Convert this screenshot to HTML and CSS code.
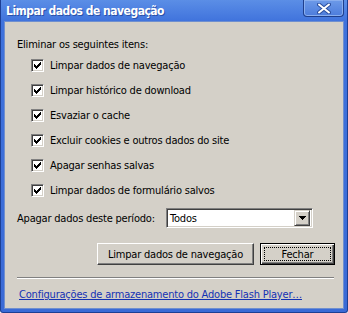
FILE: index.html
```html
<!DOCTYPE html>
<html lang="pt-BR">
<head>
    <meta charset="UTF-8">
    <title>Limpar dados de navegação</title>
    <link rel="stylesheet" href="styles.css">
</head>
<body>

<div class="window">
    <!-- Barra de título -->
    <div class="titlebar">
        <span class="title">Limpar dados de navegação</span>
        <div class="close-btn">
            <svg width="14" height="11" viewBox="0 0 14 11">
                <path d="M2 1.5 L12 9.5 M12 1.5 L2 9.5" stroke="#2c4f9e" stroke-width="4" stroke-linecap="round"/>
                <path d="M2 1.5 L12 9.5 M12 1.5 L2 9.5" stroke="#ffffff" stroke-width="2" stroke-linecap="round"/>
            </svg>
        </div>
    </div>

    <div class="client">
        <div class="heading">Eliminar os seguintes itens:</div>

        <div class="items">
            <div class="item"><span class="checkbox checked"></span>Limpar dados de navegação</div>
            <div class="item"><span class="checkbox checked"></span>Limpar histórico de download</div>
            <div class="item"><span class="checkbox checked"></span>Esvaziar o cache</div>
            <div class="item"><span class="checkbox checked"></span>Excluir cookies e outros dados do site</div>
            <div class="item"><span class="checkbox checked"></span>Apagar senhas salvas</div>
            <div class="item"><span class="checkbox checked"></span>Limpar dados de formulário salvos</div>
        </div>

        <div class="period">
            <span class="period-label">Apagar dados deste período:</span>
            <div class="select">
                <span class="select-value">Todos</span>
                <span class="select-arrow">
                    <svg width="7" height="4" viewBox="0 0 7 4"><path d="M0 0h7v1h-7z M1 1h5v1h-5z M2 2h3v1h-3z M3 3h1v1h-1z" fill="#000" shape-rendering="crispEdges"/></svg>
                </span>
            </div>
        </div>

        <div class="buttons">
            <button class="button">Limpar dados de navegação</button>
            <button class="button default"><span class="focus">Fechar</span></button>
        </div>

        <div class="separator"></div>

        <a class="link" href="#">Configurações de armazenamento do Adobe Flash Player…</a>
    </div>
</div>

</body>
</html>
```

FILE: styles.css
```css
body {
    margin: 0;
    background-color: #ffffff;
    font-family: "DejaVu Sans Condensed", "Liberation Sans", sans-serif;
    font-size: 11px;
    letter-spacing: -0.2px;
}

.window {
    width: 348px;
    height: 313px;
    box-sizing: border-box;
    display: flex;
    flex-direction: column;
    background: linear-gradient(#5b8ee6, #3f72dc 22px, #3a6ad6);
    border: 1px solid #1d3f94;
    border-top: none;
    border-radius: 0 0 3px 3px;
}

/* Barra de título */
.titlebar {
    height: 21px;
    display: flex;
    align-items: center;
    justify-content: space-between;
    padding-left: 5px;
}

.title {
    color: #ffffff;
    font-weight: bold;
    font-size: 12px;
    letter-spacing: -0.5px;
    text-shadow: 1px 1px 0 #2a50a8;
}

.close-btn {
    width: 41px;
    height: 17px;
    box-sizing: border-box;
    align-self: flex-start;
    margin-right: 3px;
    border: 1px solid #1f3f8c;
    border-top: none;
    border-radius: 0 0 4px 4px;
    background: linear-gradient(#6d9ae8, #4c7cdc);
    box-shadow: inset 0 0 0 1px #89aeee;
    display: flex;
    align-items: center;
    justify-content: center;
}

/* Conteúdo do diálogo */
.client {
    flex: 1;
    margin: 0 3px 3px 3px;
    background-color: #d4d0c8;
    border: 1px solid #6f8fcf;
    padding: 0 8px 0 12px;
    color: #000000;
}

.heading {
    margin-top: 16px;
    line-height: 14px;
}

.items {
    margin-top: 1px;
    padding-left: 14px;
}

.item {
    height: 25px;
    display: flex;
    align-items: center;
}

.checkbox {
    width: 13px;
    height: 13px;
    box-sizing: border-box;
    margin-right: 6px;
    background-color: #ffffff;
    border: 1px solid;
    border-color: #808080 #ffffff #ffffff #808080;
    box-shadow: inset 1px 1px 0 #404040, inset -1px -1px 0 #d4d0c8;
}

.checkbox.checked {
    background-image: url("data:image/svg+xml,%3Csvg xmlns='http://www.w3.org/2000/svg' width='7' height='7' shape-rendering='crispEdges'%3E%3Cpath d='M6 0h1v1h-1z M5 1h2v1h-2z M0 2h1v1h-1z M4 2h3v1h-3z M0 3h2v1h-2z M3 3h3v1h-3z M0 4h5v1h-5z M1 5h3v1h-3z M2 6h1v1h-1z' fill='black'/%3E%3C/svg%3E");
    background-repeat: no-repeat;
    background-position: 2px 2px;
}

.period {
    margin-top: 5px;
    display: flex;
    align-items: center;
}

.period-label {
    width: 149px;
}

.select {
    width: 147px;
    height: 20px;
    box-sizing: border-box;
    background-color: #ffffff;
    border: 1px solid;
    border-color: #808080 #ffffff #ffffff #808080;
    box-shadow: inset 1px 1px 0 #404040, inset -1px -1px 0 #d4d0c8;
    display: flex;
    align-items: center;
    justify-content: space-between;
    padding: 2px;
}

.select-value {
    padding-left: 1px;
}

.select-arrow {
    width: 16px;
    height: 16px;
    box-sizing: border-box;
    background-color: #d4d0c8;
    border: 1px solid;
    border-color: #d4d0c8 #404040 #404040 #d4d0c8;
    box-shadow: inset 1px 1px 0 #ffffff, inset -1px -1px 0 #808080;
    display: flex;
    align-items: center;
    justify-content: center;
}

.buttons {
    margin-top: 15px;
    display: flex;
    justify-content: flex-end;
    gap: 6px;
}

.button {
    width: 157px;
    height: 22px;
    box-sizing: border-box;
    font-family: inherit;
    font-size: 11px;
    letter-spacing: -0.2px;
    white-space: nowrap;
    color: #000000;
    background-color: #d4d0c8;
    border: 1px solid;
    border-color: #ffffff #404040 #404040 #ffffff;
    box-shadow: inset -1px -1px 0 #808080;
    padding: 0;
}

.button.default {
    width: 75px;
    border: 1px solid #000000;
    box-shadow: inset 1px 1px 0 #ffffff, inset -1px -1px 0 #404040, inset -2px -2px 0 #808080;
    padding: 3px;
}

.focus {
    display: flex;
    align-items: center;
    justify-content: center;
    height: 100%;
    box-sizing: border-box;
    border: 1px dotted #000000;
}

.separator {
    margin-top: 12px;
    margin-right: 1px;
    height: 1px;
    background-color: #808080;
    border-bottom: 1px solid #ffffff;
}

.link {
    display: block;
    margin-top: 9px;
    margin-left: 2px;
    line-height: 14px;
    color: #1432b4;
}
```
